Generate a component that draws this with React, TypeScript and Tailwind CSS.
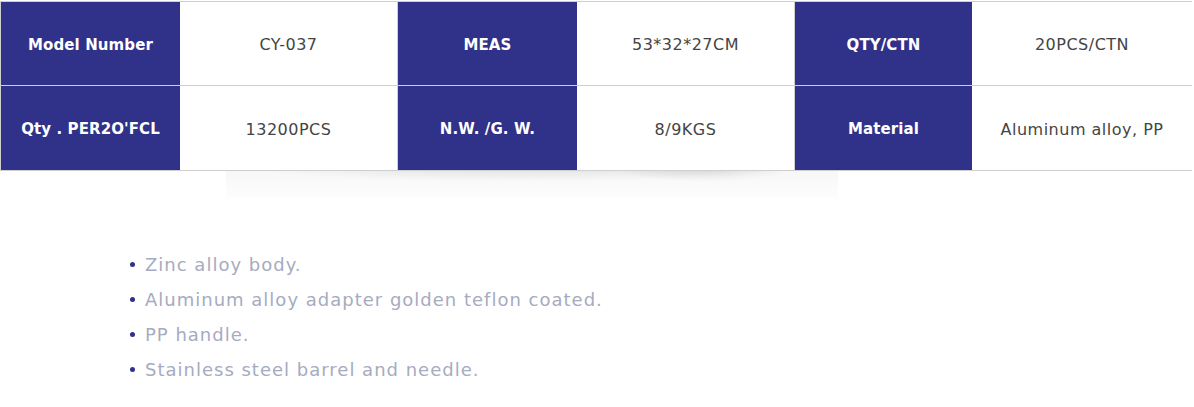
import React from "react";

const rows = [
  ["Model Number", "CY-037", "MEAS", "53*32*27CM", "QTY/CTN", "20PCS/CTN"],
  ["Qty . PER2O'FCL", "13200PCS", "N.W. /G. W.", "8/9KGS", "Material", "Aluminum alloy, PP"],
];

const widths = ["w-[179px]", "w-[217px]", "w-[180px]", "w-[217px]", "w-[178px]", "w-[220px]"];

const items = [
  "Zinc alloy body.",
  "Aluminum alloy adapter golden teflon coated.",
  "PP handle.",
  "Stainless steel barrel and needle.",
];

export default function App() {
  return (
    <div className="w-[1194px] h-[407px] bg-white relative overflow-hidden" style={{ fontFamily: '"DejaVu Sans", "Liberation Sans", sans-serif' }}>
      <div className="pt-px">
        <div className="w-[1192px] border border-[#cfcfcf] relative z-10 bg-white">
          {rows.map((r, ri) => (
            <div key={ri} className={`flex h-[84px] ${ri === 0 ? "border-b border-[#cfcfcf]" : ""}`}>
              {r.map((c, ci) => {
                const header = ci % 2 === 0;
                return (
                  <div
                    key={ci}
                    className={`${widths[ci]} shrink-0 flex items-center justify-center pt-[3px] ${
                      header
                        ? "bg-[#303189] text-white font-semibold text-[15px] tracking-[0.1px]"
                        : "bg-white text-[#444444] text-[16px] tracking-[0.5px]"
                    } ${ci > 0 && header ? "border-l border-[#cfcfcf]" : ""}`}
                  >
                    {c}
                  </div>
                );
              })}
            </div>
          ))}
        </div>
        <div className="relative h-[30px] w-[612px] ml-[226px] -mt-px">
          <div className="absolute left-0 top-0 w-[612px] h-[28px] bg-gradient-to-b from-[#f7f7f7] to-[#fdfdfd]" />
          <div className="absolute left-[10px] right-[40px] -top-[4px] h-[16px] bg-[radial-gradient(ellipse_at_center_top,_rgba(0,0,0,0.10),_rgba(0,0,0,0)_70%)]" />
          <div className="absolute left-[380px] right-[40px] -top-[4px] h-[16px] bg-[radial-gradient(ellipse_at_center_top,_rgba(0,0,0,0.12),_rgba(0,0,0,0)_70%)]" />
        </div>
      </div>
      <ul className="mt-[47px] pl-[130px]">
        {items.map((t) => (
          <li key={t} className="flex items-center h-[35px] text-[18px] tracking-[1px] text-[#a6abbf]">
            <span className="w-[5px] h-[5px] rounded-full bg-[#303189] mr-[10px] shrink-0" />
            {t}
          </li>
        ))}
      </ul>
    </div>
  );
}
